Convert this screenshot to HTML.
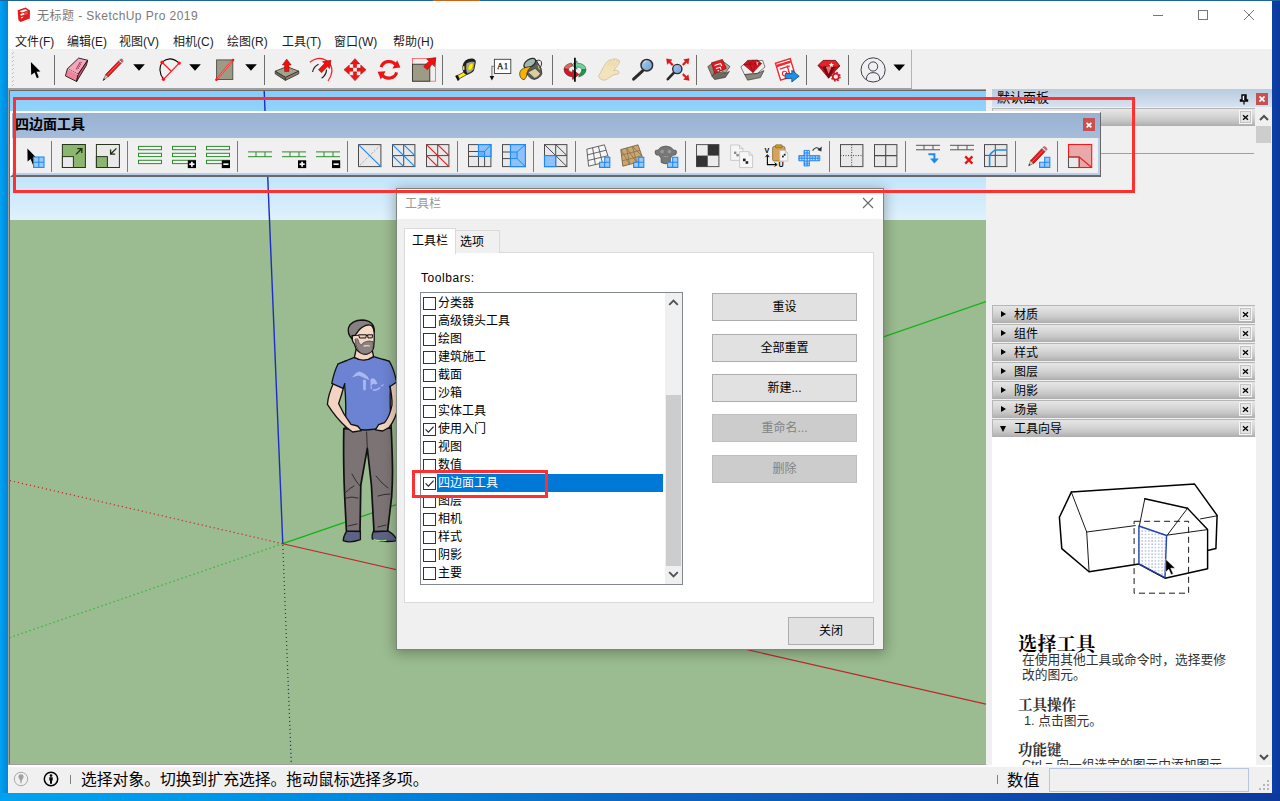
<!DOCTYPE html>
<html lang="zh-CN">
<head>
<meta charset="utf-8">
<title>无标题 - SketchUp Pro 2019</title>
<style>
*{box-sizing:border-box;margin:0;padding:0}
html,body{width:1280px;height:801px;overflow:hidden}
body{position:relative;font-family:"Liberation Sans","Noto Sans CJK SC",sans-serif;font-size:12px;color:#000;
 background:linear-gradient(90deg,#00a2f2 0px,#0086d6 8px,#0a5cb8 640px,#0c3fa6 1272px,#0b3a9e 1280px)}
.abs{position:absolute}
#deskbottom{left:0;top:793px;width:1280px;height:8px;background:linear-gradient(90deg,#00a2ee 0,#0098e8 200px,#0082da 400px,#0a66c2 640px,#0c52b2 900px,#0b3a9c 1280px)}
#desktop-top{left:0;top:0;width:1280px;height:1px;background:#1b64a0}
#desktop-top i{position:absolute;left:433px;top:0;width:47px;height:1px;background:#c8641e}
#win{left:8px;top:1px;width:1264px;height:792px;background:#fff}
#title{left:37px;top:8px;height:17px;line-height:17px;font-size:12px;color:#7a7a7a;white-space:nowrap;letter-spacing:0.45px}
#menubar{left:8px;top:30px;width:1264px;height:20px;background:#fff}
#menubar span{position:absolute;top:2px;color:#1c1c1c;line-height:20px;white-space:nowrap}
#tbrow{left:8px;top:49px;width:1264px;height:41px;background:#f0f0f0}
#tb{left:8px;top:50px;width:904px;height:38px;background:#f0f0f0;border-right:1px solid #b4b4b4}
#tbline1{left:8px;top:88px;width:904px;height:2px;background:#a0a0a0}
#rightbg{left:986px;top:88px;width:286px;height:677px;background:#f0f0f0}
#vp{left:8px;top:89px;width:978px;height:676px;background:#a0a0a0;overflow:hidden}
#vpin{left:1px;top:1px;width:977px;height:674px;background:#696969}
#scene{left:2px;top:2px;width:976px;height:673px}
#status{left:8px;top:765px;width:1264px;height:28px;background:#f0f0f0}

#dp-head{left:992px;top:89px;width:280px;height:18px;background:linear-gradient(#b9cbdf,#d6e2ef);font-size:13px;line-height:18px;padding-left:5px;white-space:nowrap}
.ph{position:absolute;left:992px;width:263px;height:18px;background:linear-gradient(#e6e6e6 0%,#d6d6d6 40%,#c6c6c6 70%,#adadad 100%);border-top:1px solid #b6b6b6;border-left:1px solid #b6b6b6;font-size:12px;line-height:17px;white-space:nowrap}
.ph b{position:absolute;left:21px;top:1px;font-weight:normal}
.ph i{position:absolute;left:8px;top:5px;width:0;height:0;border-left:5px solid #000;border-top:3.5px solid transparent;border-bottom:3.5px solid transparent}
.ph i.dn{left:7px;top:6px;border-left:3.5px solid transparent;border-right:3.5px solid transparent;border-top:6px solid #000;border-bottom:none}
.ph u{position:absolute;left:246px;top:1px;width:13px;height:14px;background:#e6e6e6;border:1px solid #f6f6f6;outline:1px solid #c4c4c4;outline-offset:-2px;text-decoration:none}
.ph u svg{position:absolute;left:2px;top:3px}
#sb{left:1256px;top:108px;width:16px;height:657px;background:#f0f0f0}
#sbthumb{left:1256px;top:126px;width:15px;height:17px;background:#cdcdcd}
#instr{left:992px;top:437px;width:264px;height:328px;background:#fff;overflow:hidden}
#instr .t1{position:absolute;left:26px;top:197px;font:bold 19px/22px "Liberation Serif","Noto Serif CJK SC",serif;letter-spacing:0.4px;white-space:nowrap}
#instr .t2{position:absolute;left:26px;font:bold 14.5px/18px "Liberation Serif","Noto Serif CJK SC",serif;color:#333;white-space:nowrap}
#instr .p{position:absolute;font-size:12.75px;line-height:15px;color:#333;white-space:nowrap}
#hline{left:992px;top:153px;width:262px;height:1px;background:#a0a0a0}

#status{border-top:2px solid #fff}
#sttext{left:81px;top:769px;font-size:15.8px;line-height:21px;white-space:nowrap}
#vcbl{left:1007px;top:770px;font-size:16.3px;line-height:21px;white-space:nowrap}
#vcb{left:1049px;top:768px;width:200px;height:24px;background:#f0f0f0;border:1px solid #b9c6da}
/*FTBCSS*/
#ftb{left:10px;top:111px;width:1091px;height:66px;background:#f0f0f0;border-top:2px solid #fff;border-left:2px solid #fff;border-right:1px solid #696969;border-bottom:2px solid #696969;box-shadow:inset -2px -2px 0 #b9cfe9}
#ftb-title{left:0;top:0;width:1088px;height:25px;background:linear-gradient(#99b2d2,#a5bcdb);font-weight:bold;font-size:14px;line-height:23px;padding-left:3px;white-space:nowrap}
#ftb-close{left:1071px;top:5px;width:12px;height:13px;background:#c75050}
/*FTBCSSEND*/
/*DLGCSS*/
#dlg{left:396px;top:188px;width:488px;height:462px;background:#f0f0f0;border:1px solid #7b877b;box-shadow:0 2px 12px 1px rgba(0,0,0,0.30)}
#dlg-title{left:0;top:0;width:486px;padding-left:8px;height:30px;background:#fff;color:#999;line-height:30px;white-space:nowrap}
#tabpage{left:6px;top:62px;width:470px;height:351px;background:#fff;border:1px solid #dadada}
#tab1{left:6px;top:38px;width:52px;height:26px;background:#fff;border:1px solid #dadada;border-bottom:none;text-align:center;line-height:24px;white-space:nowrap}
#tab2{left:57px;top:40px;width:45px;height:23px;background:#f0f0f0;border:1px solid #dadada;border-bottom:none;text-align:left;line-height:22px;white-space:nowrap;padding-left:4px}
#tblabel{left:23px;top:79px;line-height:18px;letter-spacing:0.55px;white-space:nowrap}
#lb{position:absolute;left:22px;top:102px;width:263px;height:293px;background:#fff;border:1px solid #828790;overflow:hidden}
.it{position:absolute;left:0;width:244px;height:18px;white-space:nowrap}
.it i{position:absolute;left:2px;top:3px;width:13px;height:13px;border:1px solid #333;background:#fff}
.it i svg{position:absolute;left:0;top:0}
.it b{position:absolute;left:16px;top:0;height:18px;line-height:18px;font-weight:normal;padding-left:1px}
.it b.sel{background:#0078d7;color:#fff;width:226px}
#lbsb{left:244px;top:0;width:17px;height:291px;background:#f0f0f0}
#lbthumb{left:1px;top:102px;width:15px;height:171px;background:#cdcdcd}
.btn{position:absolute;background:#e1e1e1;border:1px solid #adadad;text-align:center;line-height:26px;white-space:nowrap}
.btn.dis{background:#cccccc;border-color:#bfbfbf;color:#838383}
/*DLGCSSEND*/
</style>
</head>
<body>
<div class="abs" id="desktop-top"><i></i></div>
<div class="abs" id="deskbottom"></div>
<div class="abs" id="win"></div>
<!--WC--><svg class="abs" style="left:1150px;top:8px" width="110" height="14" viewBox="1150 8 110 14" fill="none" stroke="#777" stroke-width="1">
<path d="M1153 15.5h10"/><rect x="1198.5" y="10.5" width="9" height="9"/><path d="M1244 10L1254 20M1254 10L1244 20"/></svg>
<svg class="abs" style="left:16px;top:6px" width="16" height="17" viewBox="16 6 16 17">
<path d="M17.6 10.2L25.6 7.6L30 10.6L29.8 18.6L20.6 22L18.4 20.2Z" fill="#e21d1d"/>
<path d="M19.4 11.2L25.4 9.2L27.6 10.6L22 12.6ZM20.2 14.2L23.6 13L24.6 13.8L24.6 14.6L21 15.8ZM20.8 17.4L23.2 16.6L23.2 17.6L21 18.4Z" fill="#fff"/>
<path d="M25 12.2L27.8 11.2L27.6 14.2L25 15Z" fill="#f04a4a"/>
</svg>
<div class="abs" id="title">无标题 - SketchUp Pro 2019</div>
<div class="abs" id="menubar">
<span style="left:7px">文件(F)</span><span style="left:59px">编辑(E)</span><span style="left:111px">视图(V)</span><span style="left:165px">相机(C)</span><span style="left:219px">绘图(R)</span><span style="left:274px">工具(T)</span><span style="left:326px">窗口(W)</span><span style="left:385px">帮助(H)</span>
</div>
<div class="abs" id="tbrow"></div>
<div class="abs" id="tb"></div>
<!--TBMAIN-BEGIN-->
<svg class="abs" style="left:8px;top:50px" width="904" height="38" viewBox="8 50 904 38">
<defs>
<path id="dd" d="M0 0h11.6l-5.8 6.6z" fill="#000"/>
<linearGradient id="lens" x1="0" y1="0" x2="1" y2="1"><stop offset="0" stop-color="#a9cbee"/><stop offset="1" stop-color="#6f9fd2"/></linearGradient>
</defs>
<!-- gripper -->
<path d="M12.5 53v34" stroke="#b4b4b4" stroke-width="1" stroke-dasharray="1 3"/>
<path d="M13.5 52v34" stroke="#c8c8c8" stroke-width="1" stroke-dasharray="1 3"/>
<!-- separators -->
<g stroke="#6e6e6e" stroke-width="1">
<path d="M54.5 55v30M264.5 55v30M442.5 55v30M552.5 55v30M696.5 55v30M806.5 55v30M848.5 55v30"/>
</g>
<!-- select arrow -->
<path d="M30.9 62L31.2 75L34.6 72.5L36.9 78.3L38.8 77.3L36.6 71.8L40.4 71.5Z" fill="#000"/>
<!-- eraser -->
<g stroke="#1a1a1a" stroke-width="0.9" stroke-linejoin="round">
<path d="M67.4 68.8L78.6 58.1L87.7 60.2L78.1 74.4Z" fill="#f7a5bb"/>
<path d="M67.4 68.8L78.1 74.4L76.6 81.5L65.4 75.9Z" fill="#f5809c"/>
<path d="M78.1 74.4L87.7 60.2L86.4 65.4L76.6 81.5Z" fill="#c8506e"/>
</g>
<path d="M76 69.5l4.2-7.5M77.5 69l1.5-1.2M78.5 67l1.7-1M79.5 65l1.5-1M80.5 63l1.3-0.6" stroke="#7a2a40" stroke-width="0.8" fill="none"/>
<path d="M67.8 69.2L78 74.6" stroke="#fde0e8" stroke-width="0.9"/>
<!-- pencil -->
<g stroke-linejoin="round">
<path d="M103 80.6L105.8 74.3L108.2 76.7Z" fill="#d8cf9a" stroke="#444" stroke-width="0.6"/>
<path d="M103 80.6l0.8-2.4l1.4 1.3z" fill="#222"/>
<path d="M105.8 74.3L118.8 60.9L121.2 63.3L108.2 76.7Z" fill="#e81414" stroke="#7a1010" stroke-width="0.7"/>
<path d="M107 75.5L120 62.1" stroke="#ff7a7a" stroke-width="0.8"/>
<path d="M118.8 60.9L119.9 59.8L122.3 62.2L121.2 63.3Z" fill="#e8e8e8" stroke="#666" stroke-width="0.5"/>
<path d="M119.9 59.8L120.8 58.9Q122.6 58.6 123.2 61.3L122.3 62.2Z" fill="#e86a7a" stroke="#8a2a3a" stroke-width="0.5"/>
</g>
<use href="#dd" x="133.2" y="64.2"/>
<!-- arc -->
<path d="M163.5 79.3Q157 70 162.1 62.2Q170 55 179.2 63.1" fill="none" stroke="#000" stroke-width="1.1"/>
<path d="M163.5 79.3L179.2 63.1M162.1 62.2L171.3 71.2" stroke="#ff1414" stroke-width="1.2" fill="none"/>
<g fill="#ff1414"><circle cx="162.1" cy="62.2" r="1.7"/><circle cx="179.2" cy="63.1" r="1.7"/><circle cx="163.5" cy="79.3" r="1.7"/></g>
<use href="#dd" x="189.2" y="64.2"/>
<!-- rectangle -->
<rect x="216.6" y="59.9" width="16.2" height="19.6" fill="#9d9a85" stroke="#4e4d42" stroke-width="0.9"/>
<path d="M216.4 79.7L233 60.1" stroke="#ff1e1e" stroke-width="1.8"/>
<path d="M217.4 78.5L232 61.3" stroke="#ffd0d0" stroke-width="0.6"/>
<g fill="#ff1414"><circle cx="216.4" cy="79.7" r="1.3"/><circle cx="233" cy="60.1" r="1.3"/></g>
<use href="#dd" x="245.2" y="64.2"/>
<!-- push/pull -->
<g stroke="#2e2e26" stroke-width="0.8" stroke-linejoin="round">
<path d="M275.2 71.2L286.9 66.6L298.8 71.2L285.4 77.4Z" fill="#a3a08b"/>
<path d="M275.2 71.2L285.4 77.4V80.4L275.2 73.8Z" fill="#6e6c58"/>
<path d="M285.4 77.4L298.8 71.2V73.8L285.4 80.4Z" fill="#85836d"/>
</g>
<path d="M286.7 59.1L291.2 65H288.9V71.4H284.6V65H282.3Z" fill="#f01010" stroke="#8a0a0a" stroke-width="0.5"/>
<!-- offset / follow me -->
<path d="M309.8 62.2Q320 54.5 328.5 62Q335.5 70 328 81" fill="none" stroke="#ff1e28" stroke-width="1.2"/>
<path d="M312.6 72Q313.5 66.5 318.6 64.2M321.6 78.2Q326 75.5 326.6 69.6" fill="none" stroke="#222" stroke-width="1.2"/>
<path d="M331 60.3L329.6 68.6L327.4 66.6L321.6 72.8L318.4 69.7L324.4 63.6L322.4 61.6Z" fill="#f01010" stroke="#8a0a0a" stroke-width="0.5"/>
<!-- move -->
<g fill="#f01414" stroke="#8a0a0a" stroke-width="0.4">
<path d="M355 58.6L359.8 64H356.6V67.6H353.4V64H350.2Z"/>
<path d="M355 80.8L359.8 75.4H356.6V71.8H353.4V75.4H350.2Z"/>
<path d="M343.9 69.7L349.3 64.9V68.1H352.9V71.3H349.3V74.5Z"/>
<path d="M366.1 69.7L360.7 64.9V68.1H357.1V71.3H360.7V74.5Z"/>
</g>
<!-- rotate -->
<g fill="none" stroke="#ee1414" stroke-width="3.1">
<path d="M381.2 67.2A8 7.2 0 0 1 395.6 64.6"/>
<path d="M396.6 72.4A8 7.2 0 0 1 382.2 75"/>
</g>
<path d="M400.4 67.6L392.4 68.4L397.2 60.2Z" fill="#ee1414"/>
<path d="M377.6 71.8L385.6 71.2L380.8 79.4Z" fill="#ee1414"/>
<!-- scale -->
<rect x="412.4" y="58.5" width="23.2" height="22.7" fill="none" stroke="#ff5a64" stroke-width="0.8"/>
<rect x="412.5" y="64.2" width="17.3" height="17" fill="#9d9a85" stroke="#33332a" stroke-width="0.9"/>
<path d="M435.8 57.6L434.6 66.6L432.2 64.3L427.2 69.8L423.7 66.5L428.9 61.2L426.6 58.9Z" fill="#f01010" stroke="#7a0a0a" stroke-width="0.5"/>
<!-- tape measure -->
<path d="M457.6 75.4L465.4 71.4L467 74.4L459.2 78.8Z" fill="#fff000" stroke="#222" stroke-width="0.7"/>
<path d="M455.2 76L457.4 74.8L459.6 79.8L457.8 81Z" fill="#111"/>
<path d="M462.4 66.4Q462.6 63 465.4 60.4Q468.6 58.2 472.6 58.6Q475.8 59.4 475.8 62L474.2 70Q473.2 72.4 467.6 74.8Q463.8 74.6 462.6 70Z" fill="#1e1e1e"/>
<path d="M466.4 63.4Q470 61 474.6 62L473.4 69.4Q471.6 72 467.4 73.4Q465.2 69 466.4 63.4Z" fill="#ababab" stroke="#666" stroke-width="0.4"/>
<ellipse cx="470.6" cy="66.8" rx="2.2" ry="3.9" transform="rotate(24 470.6 66.8)" fill="#fff200" stroke="#8a7a10" stroke-width="0.4"/>
<path d="M462.8 66.4L464.4 65.8L464.6 69.8L463 70.2Z" fill="#f0e000"/>
<!-- text label -->
<rect x="494.4" y="59.3" width="16.4" height="14.2" fill="#fff" stroke="#3c3c3c" stroke-width="0.9"/>
<text x="502.9" y="69.2" text-anchor="middle" font-family="Liberation Serif,serif" font-size="8.8" letter-spacing="0.5" fill="#111" stroke="#111" stroke-width="0.25">A1</text>
<path d="M494.3 66.4H491.9V76.4" fill="none" stroke="#8a8a8a" stroke-width="1.3"/>
<path d="M489.6 76L494.2 76L491.9 80.4Z" fill="#111"/>
<!-- paint bucket -->
<path d="M523.8 65.6L526.4 72.6Q529 78.8 534.4 79.4Q540.4 78 541.8 73.6L541 68.2L536.4 60.6Z" fill="#5d5d5a" stroke="#222" stroke-width="0.8" stroke-linejoin="round"/>
<path d="M528 72.2L535.2 68.4L540.4 73.4Q538.6 77 534.6 78.2Z" fill="#dacf9e" stroke="#333" stroke-width="0.5"/>
<path d="M536.8 64L540 67L540.6 70.4L538.2 68.8Z" fill="#c9bc88" stroke="#333" stroke-width="0.4"/>
<ellipse cx="529.8" cy="63.2" rx="6.6" ry="3.7" transform="rotate(-33 529.8 63.2)" fill="#9db8b2" stroke="#2a2a2a" stroke-width="1.2"/>
<path d="M535.8 60.8Q541.8 58.6 541.6 64Q541.4 66.4 539.6 67.8" fill="none" stroke="#222" stroke-width="0.9"/>
<path d="M519.8 72.4Q521 67.2 531.4 66.4Q527.4 69.6 527 73Q526.8 77.8 524.2 79.8Q519 78.6 519.8 72.4Z" fill="#f8b200" stroke="#3a2a08" stroke-width="0.7"/>
<!-- orbit -->
<g stroke-linejoin="round" stroke-width="0.5">
<path d="M564 69Q564.6 64.4 571.4 63L572.6 66Q568.6 66.8 568.4 69.4Z" fill="#e06a58" stroke="#5a1010"/>
<path d="M564 69Q564 75.6 572.6 77L572.6 79.6L579 74.4L572.6 69.8L572.6 72.4Q568.6 71.8 568.4 69.4Z" fill="#d01828" stroke="#4a060c"/>
<path d="M586 69.6Q585.6 75.4 578.6 76.8L580 73.4Q581.8 72.4 581.8 69.6Z" fill="#1f9a48" stroke="#0a3a1a"/>
<path d="M571.8 65L577 60.8L577 63Q585.6 63.6 586 69.6L581.8 69.6Q581.6 67.2 577 66.8L577 69.2Z" fill="#6fd09a" stroke="#0e4a26"/>
</g>
<path d="M574.9 57.8V81.8" stroke="#000" stroke-width="1.7"/>
<!-- pan hand -->
<path d="M598.3 76.8Q600.4 72.6 603.4 67.2Q605.2 63.6 607.4 61.4Q609.4 59.4 611.6 59.8Q612.8 58.6 614.8 59Q616.6 58.8 617.8 59.8Q619.8 60.2 619.6 62Q618.6 64.6 616.6 66.8L613.6 70.6Q616.4 69.6 618.6 71.2Q619.8 72.6 618.6 73.8Q616.4 74.6 614 74.8Q611 76 608.2 78.4Q605.6 80.6 603.6 80.2Q600 79.4 598.3 76.8Z" fill="#f3e3bc" stroke="#c9b98f" stroke-width="0.7" stroke-linejoin="round"/>
<path d="M611.6 59.8L607.6 66M614.8 59L610.6 66.4M617.8 59.8L613.4 67" stroke="#dccba0" stroke-width="0.7" fill="none"/>
<path d="M606.4 66.4Q609 64.6 611.4 66.6" stroke="#f0ec8a" stroke-width="1" fill="none"/>
<!-- zoom -->
<path d="M642.6 70.8L633.6 79.2" stroke="#2a2a2a" stroke-width="3" stroke-linecap="round"/>
<circle cx="646.8" cy="65.2" r="5.8" fill="url(#lens)" stroke="#2e2e2e" stroke-width="1.5"/>
<path d="M643.4 63.4Q644.4 61.2 646.8 61" stroke="#d8eafa" stroke-width="1" fill="none"/>
<!-- zoom extents -->
<path d="M674 72.6L667.8 79.2" stroke="#2a2a2a" stroke-width="2.6" stroke-linecap="round"/>
<circle cx="677.3" cy="69" r="4.6" fill="url(#lens)" stroke="#2e2e2e" stroke-width="1.4"/>
<g fill="#f01414" stroke="#8a0a0a" stroke-width="0.3">
<path d="M666.4 58.8L672 59.8L670.4 61.4L673.4 64.4L672 65.8L669 62.8L667.4 64.4Z"/>
<path d="M689.2 58.6L688.2 64.2L686.6 62.6L683.6 65.6L682.2 64.2L685.2 61.2L683.6 59.6Z"/>
<path d="M689.2 80.4L683.6 79.4L685.2 77.8L682.2 74.8L683.6 73.4L686.6 76.4L688.2 74.8Z"/>
</g>
<!-- 3D warehouse -->
<g stroke="#2a2a2a" stroke-width="0.6" stroke-linejoin="round">
<path d="M707.8 66.6L713.4 62.4L716 71.4L712 76.2Z" fill="#8a8878"/>
<path d="M722.6 61L730 66.6L725.2 73.2L720 70Z" fill="#aaa898"/>
<path d="M712 76.2L716 71.4L725.2 73.2L729.4 71.4L725.4 77.4L714.6 79.6Z" fill="#6e6c5c"/>
<path d="M711.4 62.8L722.4 59.4L726.4 68.4L714.6 73.6Z" fill="#e01a22" stroke="#8a0a10"/>
</g>
<path d="M714.6 65.4L720.6 63.4L721.8 66M716 68.6L720.2 67.2L721 69.6M717.6 71L719 70.4" stroke="#fff" stroke-width="1.1" fill="none"/>
<!-- extension warehouse -->
<g stroke="#2a2a2a" stroke-width="0.6" stroke-linejoin="round">
<path d="M740.8 66.8L748.4 61.2L762.6 60.4L765 67L757.4 73.4L744.6 74.6Z" fill="#f0f0f0"/>
<path d="M744.6 74.6L757.4 73.4L764 70.6L760.4 77.6L747.6 80.2Z" fill="#8a887a"/>
<path d="M743.6 64.6L747.6 60.4L757.4 60L761.6 63.6L753 72.6Z" fill="#d81420" stroke="#5a0a10"/>
</g>
<path d="M743.6 64.6L761.6 63.6M747.6 60.4L750 64.4L753 72.6M757.4 60L755.6 64L753 72.6M750 64.4L752.6 60.2L755.6 64" stroke="#7a0a12" stroke-width="0.5" fill="none"/>
<path d="M756.6 60.8l0.8 1.6l1.6 0.2l-1.4 1l0.4 1.6l-1.4-0.9" fill="#ffe8d0"/>
<!-- layout -->
<g transform="rotate(-17 786 69)">
<rect x="777.6" y="60.4" width="15.4" height="17.6" fill="#fff" stroke="#f02832" stroke-width="1.4"/>
<path d="M778 63.4H792.6" stroke="#f02832" stroke-width="2.4"/>
<path d="M780 67.2H790.6M788 66V78" stroke="#f02832" stroke-width="1.3"/>
<circle cx="783.4" cy="73" r="2.3" fill="none" stroke="#f02832" stroke-width="1.1"/>
</g>
<path d="M785.2 73.6H791.8V70.2L799.2 76.2L791.8 82V78.6H785.2Z" fill="#1e90e8" stroke="#0a3a6a" stroke-width="0.7" stroke-linejoin="round"/>
<!-- ruby ext manager -->
<g stroke="#5a060c" stroke-width="0.5" stroke-linejoin="round">
<path d="M818 65.6L823.2 60.4H835.4L839.9 66L828.6 78.2Z" fill="#c8101a"/>
<path d="M818 65.6L823.2 60.4H835.4L839.9 66L834.6 67.4L828.6 66.2L822.8 67.2Z" fill="#e8202a"/>
<path d="M822.8 67.2L828.6 66.2L834.6 67.4L828.6 78.2Z" fill="#7a0a12"/>
<path d="M825.8 66.8L828.6 66.2L831.6 66.8L828.6 74Z" fill="#f06a72" stroke="none"/>
</g>
<path d="M831.4 62.4l0.8 1.7l1.8 0.3l-1.5 1l0.4 1.8l-1.5-1l-1.5 1l0.4-1.8l-1.5-1l1.8-0.3z" fill="#fff0d8"/>
<g transform="translate(835.8 76.7)"><circle r="3" fill="#f0f0f0" stroke="#d8141e" stroke-width="1.7"/><circle r="4.1" fill="none" stroke="#d8141e" stroke-width="1.3" stroke-dasharray="1.6 1.62"/><circle r="4.8" fill="none" stroke="#5a060c" stroke-width="0.3" stroke-dasharray="1.9 1.87"/></g>
<!-- user -->
<g fill="none" stroke="#2b2b3c" stroke-width="0.9">
<circle cx="873.1" cy="69.9" r="12.1"/>
<circle cx="873.1" cy="66.5" r="4.6"/>
<path d="M866.4 79.6Q866.4 72.6 873.1 72.6Q879.8 72.6 879.8 79.6"/>
</g>
<use href="#dd" x="893.4" y="64.4"/>
</svg>
<!--TBMAIN-END-->
<div class="abs" id="rightbg"></div>
<div class="abs" id="tbline1"></div>
<div class="abs" id="vp"><div class="abs" id="vpin"></div>
<svg class="abs" id="scene" width="976" height="673" viewBox="10 91 976 673">
<defs><linearGradient id="sky" x1="0" y1="0" x2="0" y2="1"><stop offset="0" stop-color="#84cefb"/><stop offset="1" stop-color="#e0f1fc"/></linearGradient></defs>
<rect x="10" y="91" width="976" height="130" fill="url(#sky)"/>
<rect x="10" y="220" width="976" height="544" fill="#9bbb90"/>
<!--AXES-BEGIN-->
<g fill="none" stroke-width="1.25">
<path d="M282.6 543.7L10 480.6" stroke="#c02424" stroke-dasharray="1.1 3"/>
<path d="M282.6 543.7L10 637.5" stroke="#18b018" stroke-dasharray="1.1 3.13"/>
<path d="M282.8 545L291.3 764" stroke="#1e2ec4" stroke-dasharray="1.1 2.9"/>
<path d="M282.8 543.7L986 301.5" stroke="#10b414"/>
<path d="M282.8 543.7L986 704.2" stroke="#b92a2a" stroke-width="1.15"/>
<path d="M282.8 543.7L264.2 91" stroke="#1e2ec4" stroke-width="1.4"/>
</g>
<!--AXES-END-->
<!--PERSON-BEGIN-->
<g stroke="#111" stroke-width="1.3" stroke-linejoin="round" stroke-linecap="round">
<!-- shoes -->
<path d="M347 530.6Q343.4 536 343.2 540.6Q350 543.4 360.4 539.6L360.4 531Z" fill="#5c6384"/>
<path d="M373.4 531Q371.6 535 372.2 539Q384 543 397 540.6Q395.6 535.4 387.6 530.6Z" fill="#5c6384"/>
<path d="M374 539.6Q380 541.4 386 540.4" stroke="#a6e08a" stroke-width="1.2" fill="none"/>
<!-- pants -->
<path d="M343.8 428.6Q343.4 450 343.8 468.7Q344 482 344.6 494.6L346.4 531L360 531.4L360.8 485L367.3 448.4L371.4 485L374 531.6L387.6 531L391.7 496.3Q392.6 482 392.5 468.7Q392.2 450 391.2 427.8Z" fill="#7b7374" stroke-width="1.7"/>
<path d="M352 474Q356 482 360 486M346 492Q350 488 354 486M346 498Q352 496 358 498M376 476Q382 484 388 488M390 494Q384 494 378 496M348 526l9-2M378 527l8-2M367.3 448.4L366.6 432" fill="none" stroke-width="0.7"/>
<!-- shirt torso -->
<path d="M354.4 357.4L338 364L344.6 384.4Q346.6 405 345.2 428.6L366 430L391.4 427.6Q389.6 405 390.4 386.6L389.4 361.4L373.6 356.6Q364 362.4 354.4 357.4Z" fill="#6c82d2"/>
<!-- left arm -->
<path d="M334.6 380.6Q328 395 327.4 404.4Q336 418 346.6 427.6L352.6 432L361.4 430.6L357.6 426L351 424.4Q343 414 338.6 403.6Q341.6 395 343.4 388Z" fill="#f3d3c1"/>
<!-- right arm -->
<path d="M389.6 384Q392.4 398 392 405Q390 416 384.6 422.6L378.6 424.6L375.4 429.8L382.6 431L389 427.6Q397 417 397.6 406.6Q398.4 394 396.2 381Z" fill="#f3d3c1"/>
<!-- sleeves -->
<path d="M346 360.8L338 364Q334 372 331.8 383.4L343 388.4L346.4 379Z" fill="#6c82d2" stroke="none"/>
<path d="M383.4 359.4L389.4 361.4Q394 369 396.6 382L389.8 386.8L387.2 377Z" fill="#6c82d2" stroke="none"/>
<path d="M346 360.8L338 364Q334 372 331.8 383.4L343 388.4L344.8 383.6M383.4 359.4L389.4 361.4Q394 369 396.6 382L389.8 386.8" fill="none"/>
<!-- neck -->
<path d="M356.2 349L354.4 357.4Q364 363.4 373.6 356.6L372.4 351Z" fill="#f3d3c1"/>
<!-- head/face -->
<path d="M352 335.6Q351.6 341 354.4 344L356.4 349.4Q361 355 366.8 354.2Q372.6 352 373.6 347.6Q374.6 340 374.2 331.4Q373.6 326 370 324L358 327Z" fill="#f6d9c6"/>
<!-- beard -->
<path d="M355 339.4L356 345.4Q357.4 351 361.6 353.4Q366 355.2 370.4 352.6Q373.2 350.4 373.4 345.6L373 341.6Q369.4 340.6 366.4 341.4Q362.6 342.2 361.4 345.2Q358.6 343.4 357.8 339.2Z" fill="#8b8381" stroke-width="0.5"/>
<path d="M363.4 345.6Q366.8 344.4 370 345.4L369.6 346.6Q366.8 345.8 363.8 346.8Z" fill="#f6d9c6" stroke="none"/>
<!-- hair -->
<path d="M352.4 339.4Q346.8 333.4 348.6 327.4Q352 320 362.2 320Q368 320.2 371.4 323.2Q374.6 326.4 374.4 332L372.6 326.4Q369.4 324 365.8 325.4Q360 328 357.6 332L355 335.4L352 335.8Z" fill="#878080"/>
</g>
<!-- glasses -->
<path d="M351.8 335.4L358.6 335.4" fill="none" stroke="#111" stroke-width="0.9"/>
<path d="M358.6 334.8L366.4 334.8L365.8 338L359.6 338ZM367.6 334.8L372.6 334.8L372.2 337.8L368 338Z" fill="#e8d2c4" stroke="#111" stroke-width="1"/>
<path d="M366.2 335.4H367.8" stroke="#111" stroke-width="0.9"/>
<!-- great lakes logo -->
<path d="M352 377.6Q355 372.6 359.4 371.4Q364 372.6 367.6 376.4L369.4 380L366.6 379Q362 377 358.6 375.6Q355 376.6 352 377.6ZM363 380Q365.6 378.4 366 381L365.8 389.6Q364.4 391.6 363.2 389.6ZM370.4 379.4Q373.4 377 375.6 380L377.6 383.6L375.6 384.4Q372.6 383 371.4 385.4L372.4 389.6L370.6 388.4ZM373 389.6Q377 389.6 380.6 386.6L379.6 389Q376.6 391.4 373 391ZM380.6 385.6L384.2 384L382.6 386.4Z" fill="#a9b8ee"/>
<!--PERSON-END-->
</svg>
</div>
<div class="abs" id="status"></div>
<svg class="abs" style="left:12px;top:770px" width="50" height="18" viewBox="12 770 50 18">
<circle cx="21" cy="779" r="6.7" fill="none" stroke="#a8a8a8" stroke-width="1"/>
<path d="M21 774.2a2.6 2.6 0 0 1 2.6 2.6c0 1.6-1.3 2.4-1.8 3.6l-0.4 3h-0.8l-0.4-3c-0.5-1.2-1.8-2-1.8-3.6a2.6 2.6 0 0 1 2.6-2.6z" fill="#a0a0a0"/>
<circle cx="51" cy="779" r="6.7" fill="none" stroke="#000" stroke-width="1.5"/>
<circle cx="51" cy="775.6" r="1.3" fill="#000"/>
<path d="M49.3 777.3h3.4v3.2h-0.7v3.2h-2v-3.2h-0.7z" fill="#000"/>
</svg>
<div class="abs" style="left:70px;top:775px;width:1px;height:9px;background:#808080"></div>
<div class="abs" id="sttext">选择对象。切换到扩充选择。拖动鼠标选择多项。</div>
<div class="abs" style="left:997px;top:775px;width:1px;height:9px;background:#808080"></div>
<div class="abs" id="vcbl">数值</div>
<div class="abs" id="vcb"></div>
<svg class="abs" style="left:1258px;top:779px" width="12" height="12" viewBox="0 0 12 12" fill="#b8b8b8"><rect x="9" y="1" width="2" height="2"/><rect x="5" y="5" width="2" height="2"/><rect x="9" y="5" width="2" height="2"/><rect x="1" y="9" width="2" height="2"/><rect x="5" y="9" width="2" height="2"/><rect x="9" y="9" width="2" height="2"/></svg>
<div class="abs" id="dp-head">默认面板</div>
<svg class="abs" style="left:1239px;top:94px" width="10" height="11" viewBox="0 0 10 11"><path d="M3 1h4v5h1.5v1H1.5V6H3z" fill="#fff" stroke="#000" stroke-width="1.4"/><path d="M6 1.5v4.5" stroke="#000" stroke-width="1.6"/><path d="M5 7v3.5" stroke="#000" stroke-width="1.2"/></svg>
<div class="abs" style="left:1256px;top:93px;width:12px;height:12px;background:#c75050"><svg class="abs" style="left:3px;top:3px" width="6" height="6" viewBox="0 0 6 6"><path d="M0.5 0.5L5.5 5.5M5.5 0.5L0.5 5.5" stroke="#fff" stroke-width="1.7"/></svg></div>
<div class="ph" style="top:108px"><u><svg width="7" height="7" viewBox="0 0 7 7"><path d="M1 1.2L6 5.8M6 1.2L1 5.8" stroke="#000" stroke-width="1.3" fill="none"/></svg></u></div>
<div class="abs" id="hline"></div>
<div class="ph" style="top:305px"><i></i><b>材质</b><u><svg width="7" height="7" viewBox="0 0 7 7"><path d="M1 1.2L6 5.8M6 1.2L1 5.8" stroke="#000" stroke-width="1.3" fill="none"/></svg></u></div>
<div class="ph" style="top:324px"><i></i><b>组件</b><u><svg width="7" height="7" viewBox="0 0 7 7"><path d="M1 1.2L6 5.8M6 1.2L1 5.8" stroke="#000" stroke-width="1.3" fill="none"/></svg></u></div>
<div class="ph" style="top:343px"><i></i><b>样式</b><u><svg width="7" height="7" viewBox="0 0 7 7"><path d="M1 1.2L6 5.8M6 1.2L1 5.8" stroke="#000" stroke-width="1.3" fill="none"/></svg></u></div>
<div class="ph" style="top:362px"><i></i><b>图层</b><u><svg width="7" height="7" viewBox="0 0 7 7"><path d="M1 1.2L6 5.8M6 1.2L1 5.8" stroke="#000" stroke-width="1.3" fill="none"/></svg></u></div>
<div class="ph" style="top:381px"><i></i><b>阴影</b><u><svg width="7" height="7" viewBox="0 0 7 7"><path d="M1 1.2L6 5.8M6 1.2L1 5.8" stroke="#000" stroke-width="1.3" fill="none"/></svg></u></div>
<div class="ph" style="top:400px"><i></i><b>场景</b><u><svg width="7" height="7" viewBox="0 0 7 7"><path d="M1 1.2L6 5.8M6 1.2L1 5.8" stroke="#000" stroke-width="1.3" fill="none"/></svg></u></div>
<div class="ph" style="top:419px"><i class="dn"></i><b>工具向导</b><u><svg width="7" height="7" viewBox="0 0 7 7"><path d="M1 1.2L6 5.8M6 1.2L1 5.8" stroke="#000" stroke-width="1.3" fill="none"/></svg></u></div>
<div class="abs" id="sb"></div><div class="abs" id="sbthumb"></div>
<svg class="abs" style="left:1259px;top:114px" width="10" height="7" viewBox="0 0 10 7"><path d="M1 6L5 2L9 6" stroke="#505050" stroke-width="2" fill="none"/></svg>
<svg class="abs" style="left:1259px;top:754px" width="10" height="7" viewBox="0 0 10 7"><path d="M1 1L5 5L9 1" stroke="#505050" stroke-width="2" fill="none"/></svg>
<div class="abs" id="instr">
<svg class="abs" style="left:0;top:0" width="264" height="190" viewBox="0 0 264 190">
<defs><pattern id="dots" width="3.3" height="3.3" patternUnits="userSpaceOnUse"><rect x="1.2" y="1.2" width="1" height="1" fill="#5570c4"/></pattern></defs>
<polyline points="79.3,55.1 202.6,47.1 225.1,78.4 223.9,111.6 215.6,113.5 215.6,131.7 173.0,141.2 146.9,127.0 97.1,134.8 69.8,111.6 67.4,80.3 79.3,55.1" fill="none" stroke="#000" stroke-width="1.5" stroke-linejoin="round" stroke-linecap="round" /><polyline points="79.3,55.1 94.7,95.0 97.1,134.8" fill="none" stroke="#000" stroke-width="0.9" stroke-linejoin="round" stroke-linecap="round" /><polyline points="94.7,95.0 143.3,88.6" fill="none" stroke="#000" stroke-width="0.9" stroke-linejoin="round" stroke-linecap="round" /><polyline points="152.8,61.8 195.5,71.3" fill="none" stroke="#000" stroke-width="1.4" stroke-linejoin="round" stroke-linecap="round" /><polyline points="152.8,61.8 147.4,88.6" fill="none" stroke="#000" stroke-width="0.9" stroke-linejoin="round" stroke-linecap="round" /><polyline points="195.5,71.3 215.6,92.6 215.6,113.5" fill="none" stroke="#000" stroke-width="1.4" stroke-linejoin="round" stroke-linecap="round" /><polyline points="195.5,71.3 175.3,98.1" fill="none" stroke="#000" stroke-width="0.9" stroke-linejoin="round" stroke-linecap="round" /><polyline points="175.3,98.1 215.6,92.6" fill="none" stroke="#000" stroke-width="0.9" stroke-linejoin="round" stroke-linecap="round" /><polyline points="208.5,81.9 225.1,78.8" fill="none" stroke="#000" stroke-width="0.9" stroke-linejoin="round" stroke-linecap="round" /><polygon points="146.9,89.0 174.6,98.5 173.0,140.5 146.9,127.0" fill="url(#dots)" stroke="#2244b0" stroke-width="1.4" stroke-linejoin="round"/><rect x="142.1" y="84.3" width="54.5" height="71.9" fill="none" stroke="#000" stroke-width="0.9" stroke-dasharray="6 4"/><path d="M173.7 122.2 l0 13 l3 -3 l2.5 5.5 l2 -1 l-2.5 -5.5 l4.5 0z" fill="#000" stroke="#fff" stroke-width="0.5"/></svg>

<div class="t1">选择工具</div>
<div class="p" style="left:30px;top:215px">在使用其他工具或命令时，选择要修</div>
<div class="p" style="left:30px;top:230px">改的图元。</div>
<div class="t2" style="top:259px">工具操作</div>
<div class="p" style="left:32px;top:276px">1. 点击图元。</div>
<div class="t2" style="top:304px">功能键</div>
<div class="p" style="left:30px;top:320px">Ctrl = 向一组选定的图元中添加图元</div>
</div>

<!--FTB-BEGIN-->
<div class="abs" id="ftb"><div class="abs" id="ftb-title">四边面工具</div>
<div class="abs" id="ftb-close"><svg class="abs" style="left:3px;top:4px" width="6" height="6" viewBox="0 0 6 6"><path d="M0.6 0.8L5.4 5.4M5.4 0.8L0.6 5.4" stroke="#fff" stroke-width="1.7"/></svg></div>
<svg class="abs" style="left:0;top:27px" width="1088" height="36" viewBox="12 140 1088 36">
<path d="M51.5 141v31" stroke="#7a7a7a" stroke-width="1"/>
<path d="M127.5 141v31" stroke="#7a7a7a" stroke-width="1"/>
<path d="M237.5 141v31" stroke="#7a7a7a" stroke-width="1"/>
<path d="M347.5 141v31" stroke="#7a7a7a" stroke-width="1"/>
<path d="M457.5 141v31" stroke="#7a7a7a" stroke-width="1"/>
<path d="M533.5 141v31" stroke="#7a7a7a" stroke-width="1"/>
<path d="M575.5 141v31" stroke="#7a7a7a" stroke-width="1"/>
<path d="M685.5 141v31" stroke="#7a7a7a" stroke-width="1"/>
<path d="M829.5 141v31" stroke="#7a7a7a" stroke-width="1"/>
<path d="M905.5 141v31" stroke="#7a7a7a" stroke-width="1"/>
<path d="M1015.5 141v31" stroke="#7a7a7a" stroke-width="1"/>
<path d="M1057.5 141v31" stroke="#7a7a7a" stroke-width="1"/>
<path d="M27.4 148.6L27.6 161.4L30.6 159L32.8 164.4L34.8 163.5L32.6 158.2L36.6 158Z" fill="#000"/>
<rect x="33.6" y="157.0" width="10.4" height="10.4" fill="#9ccaf8" stroke="#1e8af0" stroke-width="1.1"/><path d="M38.8 157.0v10.4M33.6 162.2h10.4" stroke="#1e8af0" stroke-width="1.1"/>
<rect x="62.4" y="144.5" width="23" height="23" fill="#8cb56f" stroke="#26361a" stroke-width="1"/>
<rect x="62.4" y="156.6" width="11" height="10.9" fill="#e9e9e9" stroke="#26361a" stroke-width="1"/>
<path d="M76 154.4L81.4 149M77.4 148.6H81.8V153" stroke="#1e2e12" stroke-width="1.3" fill="none"/>
<rect x="96.4" y="144.5" width="23" height="23" fill="#e9e9e9" stroke="#26361a" stroke-width="1"/>
<rect x="96.4" y="156.6" width="11" height="10.9" fill="#8cb56f" stroke="#26361a" stroke-width="1"/>
<path d="M116.4 148.4L111 153.8M110.6 149.6V154.2H115.2" stroke="#1e2e12" stroke-width="1.3" fill="none"/>
<rect x="138.5" y="146.4" width="23" height="3.3" fill="#f4f4f4" stroke="#2f8a2f" stroke-width="1"/>
<rect x="138.5" y="153.3" width="23" height="3.3" fill="#f4f4f4" stroke="#2f8a2f" stroke-width="1"/>
<rect x="138.5" y="160.3" width="23" height="3.3" fill="#f4f4f4" stroke="#2f8a2f" stroke-width="1"/>
<rect x="172.5" y="146.4" width="23" height="3.3" fill="#f4f4f4" stroke="#2f8a2f" stroke-width="1"/>
<rect x="172.5" y="153.3" width="23" height="3.3" fill="#f4f4f4" stroke="#2f8a2f" stroke-width="1"/>
<rect x="172.5" y="160.3" width="23" height="3.3" fill="#f4f4f4" stroke="#2f8a2f" stroke-width="1"/>
<rect x="187.8" y="160.3" width="8.2" height="7.8" fill="#000"/>
<path d="M189.3 164.2h5.2" stroke="#fff" stroke-width="1.7"/>
<path d="M191.9 161.7v5" stroke="#fff" stroke-width="1.7"/>
<rect x="206.5" y="146.4" width="23" height="3.3" fill="#f4f4f4" stroke="#2f8a2f" stroke-width="1"/>
<rect x="206.5" y="153.3" width="23" height="3.3" fill="#f4f4f4" stroke="#2f8a2f" stroke-width="1"/>
<rect x="206.5" y="160.3" width="23" height="3.3" fill="#f4f4f4" stroke="#2f8a2f" stroke-width="1"/>
<rect x="221.8" y="160.3" width="8.2" height="7.8" fill="#000"/>
<path d="M223.3 164.2h5.2" stroke="#fff" stroke-width="1.7"/>
<path d="M248.0 151.9h24M248.0 156.7h24M256.0 151.9V156.7M265.0 151.9V156.7" stroke="#2f8a2f" stroke-width="1" fill="none"/>
<path d="M282.0 151.9h24M282.0 156.7h24M290.0 151.9V156.7M299.0 151.9V156.7" stroke="#2f8a2f" stroke-width="1" fill="none"/>
<rect x="298.0" y="160.3" width="8.2" height="7.8" fill="#000"/>
<path d="M299.5 164.2h5.2" stroke="#fff" stroke-width="1.7"/>
<path d="M302.1 161.7v5" stroke="#fff" stroke-width="1.7"/>
<path d="M316.0 151.9h24M316.0 156.7h24M324.0 151.9V156.7M333.0 151.9V156.7" stroke="#2f8a2f" stroke-width="1" fill="none"/>
<rect x="332.0" y="160.3" width="8.2" height="7.8" fill="#000"/>
<path d="M333.5 164.2h5.2" stroke="#fff" stroke-width="1.7"/>
<rect x="358.5" y="144.6" width="22.4" height="22" fill="#e9e9e9" stroke="#4a4a4a" stroke-width="1"/>
<path d="M358.5 166.6L380.9 144.6" stroke="#8a8a8a" stroke-width="0.9" stroke-dasharray="1 1.2"/>
<path d="M358.5 144.6L380.9 166.6" stroke="#1e8af0" stroke-width="1.2"/>
<rect x="392.5" y="144.6" width="22.4" height="22" fill="#e9e9e9" stroke="#4a4a4a" stroke-width="1"/>
<path d="M403.7 144.6v22M392.5 155.6h22.4" stroke="#4a4a4a" stroke-width="1"/>
<path d="M392.5 144.6l11.2 11M403.7 144.6l11.2 11M392.5 155.6l11.2 11M403.7 155.6l11.2 11" stroke="#1e8af0" stroke-width="1.2"/>
<rect x="426.5" y="144.6" width="22.4" height="22" fill="#e9e9e9" stroke="#4a4a4a" stroke-width="1"/>
<path d="M437.7 144.6v22M426.5 155.6h22.4" stroke="#4a4a4a" stroke-width="1"/>
<path d="M426.5 144.6l11.2 11M437.7 144.6l11.2 11M426.5 155.6l11.2 11M437.7 155.6l11.2 11" stroke="#e81e1e" stroke-width="1.2"/>
<rect x="468.5" y="144.6" width="22.4" height="22" fill="#e9e9e9" stroke="#4a4a4a" stroke-width="1"/>
<path d="M468.5 151.5h10M468.5 156.4h22.4M478.5 144.6v22M484.6 156.4v10.2" stroke="#4a4a4a" stroke-width="1"/>
<rect x="478.5" y="144.6" width="12.4" height="11.8" fill="#8fc2fa" stroke="#1e8af0" stroke-width="1.2"/>
<rect x="478.5" y="151.4" width="6.1" height="5" fill="#6aaef6" stroke="#1e8af0" stroke-width="1"/>
<path d="M484.6 151.4L490.9 144.6" stroke="#1e8af0" stroke-width="1"/>
<rect x="502.5" y="144.6" width="22.4" height="22" fill="#e9e9e9" stroke="#4a4a4a" stroke-width="1"/>
<path d="M502.5 152h8M502.5 158.6h8" stroke="#4a4a4a" stroke-width="1"/>
<rect x="510.5" y="144.6" width="14.9" height="22" fill="#8fc2fa" stroke="#1e8af0" stroke-width="1.2"/>
<rect x="510.5" y="152" width="6.6" height="6.6" fill="#7ab8f8" stroke="#1e8af0" stroke-width="1"/>
<path d="M517.1 152L525.4 144.6M517.1 158.6L525.4 166.6" stroke="#1e8af0" stroke-width="1"/>
<rect x="544.5" y="144.6" width="22.4" height="22" fill="#e9e9e9" stroke="#4a4a4a" stroke-width="1"/>
<path d="M555.7 144.6v22M544.5 155.6h22.4M544.5 144.6l11.2 11M555.7 144.6l11.2 11M555.7 155.6l11.2 11" stroke="#4a4a4a" stroke-width="1"/>
<rect x="544.5" y="155.6" width="11.2" height="11" fill="#8fc2fa" stroke="#1e8af0" stroke-width="1.2"/>
<path d="M586.8 149.2L604.4 144.8L609.6 161.2L588.6 166.2Z" fill="#f6f6f6" stroke="#555" stroke-width="0.9"/>
<path d="M592.6 147.8L595.4 164.6M598.4 146.3L602.4 162.9M587.4 154.9L606.1 150.2M588 160.5L607.8 155.7" stroke="#555" stroke-width="0.9" fill="none"/>
<path d="M604.7 157.2h5.1v10.2h-10.2v-5.1h5.1z" fill="#9ccaf8" stroke="#1e8af0" stroke-width="1.1"/><path d="M604.7 162.3v5.1M604.7 162.3h5.1" stroke="#1e8af0" stroke-width="1.1"/>
<path d="M620.8 149.6L638 144.8L643.6 160.6L622.8 166.2Z" fill="#c9a673" stroke="#6a5a3a" stroke-width="0.8"/>
<path d="M626.6 148L629.6 164.4M632.4 146.4L636.6 162.4M621.4 155.2L640 150.4M622.2 160.8L641.8 155.8M620.8 149.6L629.6 164.4M626.6 148L636.6 162.4M632.4 146.4L641.8 155.8" stroke="#7a6238" stroke-width="0.6" fill="none"/>
<path d="M638.7 157.2h5.1v10.2h-10.2v-5.1h5.1z" fill="#9ccaf8" stroke="#1e8af0" stroke-width="1.1"/><path d="M638.7 162.3v5.1M638.7 162.3h5.1" stroke="#1e8af0" stroke-width="1.1"/>
<path d="M655 152.4Q654.6 149.6 658 150L660.4 147.4Q665.8 144.6 671.2 147.4L673.6 150Q677 149.6 676.6 152.4Q676.4 155.6 673 155.2L670.6 158V162.4Q665.8 165.4 661 162.4V158L658.6 155.2Q655.2 155.6 655 152.4Z" fill="#777" stroke="#4a4a4a" stroke-width="0.6"/>
<circle cx="662.2" cy="151.6" r="1.8" fill="#999"/><circle cx="669.4" cy="151.6" r="1.8" fill="#999"/><path d="M663.6 156.6h4.4" stroke="#999" stroke-width="1"/>
<path d="M672.7 157.2h5.1v10.2h-10.2v-5.1h5.1z" fill="#9ccaf8" stroke="#1e8af0" stroke-width="1.1"/><path d="M672.7 162.3v5.1M672.7 162.3h5.1" stroke="#1e8af0" stroke-width="1.1"/>
<rect x="696.5" y="144.6" width="22.4" height="22" fill="#ececec" stroke="#555" stroke-width="1"/>
<rect x="707.7" y="144.6" width="11.2" height="11" fill="#333"/><rect x="696.5" y="155.6" width="11.2" height="11" fill="#333"/>
<path d="M730.6 145.0h8.8l3.6 3.6v11.8h-12.4z" fill="#f6f6f6" stroke="#c0c0c0" stroke-width="0.8"/>
<path d="M739.4 145.0v3.6h3.6" fill="none" stroke="#c0c0c0" stroke-width="0.8"/>
<rect x="734" y="151.6" width="2.4" height="2.4" fill="#8a8a8a"/><rect x="736.4" y="154" width="2.4" height="2.4" fill="#8a8a8a"/>
<path d="M739.6 151.6h9.4l3.6 3.6v12.4h-13.0z" fill="#f6f6f6" stroke="#c0c0c0" stroke-width="0.8"/>
<path d="M749.0 151.6v3.6h3.6" fill="none" stroke="#c0c0c0" stroke-width="0.8"/>
<rect x="743" y="158.6" width="2.6" height="2.6" fill="#222"/><rect x="745.6" y="161.2" width="2.6" height="2.6" fill="#222"/>
<rect x="772.6" y="146.4" width="12.4" height="14.6" rx="1.6" fill="#d8a25c" stroke="#8a6a38" stroke-width="0.8"/>
<rect x="775.4" y="144.8" width="6.8" height="3" rx="0.8" fill="#c8a020" stroke="#6a5a20" stroke-width="0.6"/>
<path d="M779.8 150.4h5.6l2.4 2.4v8.2h-8.0z" fill="#f6f6f6" stroke="#c0c0c0" stroke-width="0.8"/>
<path d="M785.4 150.4v2.4h2.4" fill="none" stroke="#c0c0c0" stroke-width="0.8"/>
<rect x="782" y="155.6" width="1.8" height="1.8" fill="#222"/><rect x="783.8" y="153.8" width="1.8" height="1.8" fill="#222"/>
<path d="M767.4 155.4V164.6H776" fill="none" stroke="#000" stroke-width="1.1"/><path d="M765.6 157.2L767.4 154.6L769.2 157.2M774.6 162.8L777.2 164.6L774.6 166.4" fill="none" stroke="#000" stroke-width="1"/>
<text x="764.6" y="152.8" font-family="Liberation Sans,sans-serif" font-size="7.2" font-weight="bold" fill="#000">V</text>
<text x="778.4" y="167" font-family="Liberation Sans,sans-serif" font-size="7.2" font-weight="bold" fill="#000">U</text>
<defs><pattern id="chk" width="2.7" height="2.7" patternUnits="userSpaceOnUse" patternTransform="translate(798.9 150.1)"><rect width="2.7" height="2.7" fill="#2a8cf2"/><rect x="0.75" y="0.75" width="1.45" height="1.45" fill="#eaf4ff"/></pattern></defs>
<path d="M804 150.4h5.4v5.2h10.4v5.2h-10.4v5.2h-5.4v-5.2h-5.2v-5.2h5.2z" fill="url(#chk)" stroke="#1e7fe8" stroke-width="0.8"/>
<path d="M812.6 150.6Q816 145.4 820.4 149.6" fill="none" stroke="#333" stroke-width="1.1"/><path d="M821.8 146.6L821.4 151.6L817.4 150Z" fill="#333"/>
<rect x="840.5" y="144.6" width="22.4" height="22" fill="#e9e9e9" stroke="#4a4a4a" stroke-width="1"/>
<path d="M851.7 144.6v22M840.5 155.6h22.4" stroke="#444" stroke-width="1" stroke-dasharray="1 1.5"/>
<rect x="874.5" y="144.6" width="22.4" height="22" fill="#e9e9e9" stroke="#4a4a4a" stroke-width="1"/>
<path d="M885.7 144.6v22M874.5 155.6h22.4" stroke="#4a4a4a" stroke-width="1.1"/>
<path d="M916.0 145.3h24M916.0 149.8h24M924.0 145.3V149.8M933.0 145.3V149.8" stroke="#555" stroke-width="1" fill="none"/>
<path d="M928.4 154.2h6v5" fill="none" stroke="#1e8af0" stroke-width="2"/><path d="M930 158.6h8.8l-4.4 4.8z" fill="#1e8af0"/>
<path d="M950.0 145.3h24M950.0 149.8h24M958.0 145.3V149.8M967.0 145.3V149.8" stroke="#555" stroke-width="1" fill="none"/>
<path d="M965.2 156.4l7.2 7.2M972.4 156.4l-7.2 7.2" stroke="#e81414" stroke-width="2.2"/>
<rect x="984.5" y="144.6" width="22.4" height="22" fill="#e9e9e9" stroke="#4a4a4a" stroke-width="1"/>
<path d="M995.3 144.6v22M984.5 155.4h22.4" stroke="#4a4a4a" stroke-width="1"/>
<path d="M989.6 166.6V156.4Q989.8 154.6 991 153.4L993.6 151Q994.8 150 996.4 150H1006.9" fill="none" stroke="#1e8af0" stroke-width="1.6"/>
<path d="M1028.6 165.8L1030.6 160.4L1033.8 163.4Z" fill="#d8cf9a" stroke="#444" stroke-width="0.5"/><path d="M1028.6 165.8l0.7-2l1.2 1.1z" fill="#222"/>
<path d="M1030.6 160.4L1042 148.4L1045.2 151.4L1033.8 163.4Z" fill="#e81414" stroke="#7a1010" stroke-width="0.6"/><path d="M1032.2 161.9L1043.6 149.9" stroke="#ff8080" stroke-width="0.7"/>
<path d="M1042 148.4L1043.2 147.2L1046.4 150.2L1045.2 151.4Z" fill="#e8e8e8" stroke="#666" stroke-width="0.4"/><path d="M1043.2 147.2L1044 146.4Q1046.2 146.2 1047.2 149.4L1046.4 150.2Z" fill="#e86a7a" stroke="#8a2a3a" stroke-width="0.4"/>
<path d="M1044.7 157.2h5.1v10.2h-10.2v-5.1h5.1z" fill="#9ccaf8" stroke="#1e8af0" stroke-width="1.1"/><path d="M1044.7 162.3v5.1M1044.7 162.3h5.1" stroke="#1e8af0" stroke-width="1.1"/>
<rect x="1068.5" y="144.5" width="23.2" height="23" fill="#eaa9a9" stroke="#ee1c1c" stroke-width="1.1"/>
<rect x="1068.5" y="157" width="10.7" height="10.5" fill="#e9e9e9" stroke="#555" stroke-width="1"/>
<path d="M1068.5 157H1079.2V167.5M1079.2 157L1091.7 167.5" fill="none" stroke="#ee1c1c" stroke-width="1.1"/>
</svg>
</div>
<!--FTB-END-->
<!--DLG-BEGIN-->
<div class="abs" id="dlg">
<div class="abs" id="dlg-title">工具栏</div>
<div class="abs" style="left:1px;top:1px">
<svg class="abs" style="left:464px;top:7px" width="12" height="12" viewBox="0 0 12 12"><path d="M1 1L11 11M11 1L1 11" stroke="#6a6a6a" stroke-width="1.1"/></svg>
<div class="abs" id="tabpage"></div>
<div class="abs" id="tab2">选项</div>
<div class="abs" id="tab1">工具栏</div>
<div class="abs" id="tblabel">Toolbars:</div>
<div class="abs" id="lb">
<div class="it" style="top:1px"><i></i><b>分类器</b></div>
<div class="it" style="top:19px"><i></i><b>高级镜头工具</b></div>
<div class="it" style="top:37px"><i></i><b>绘图</b></div>
<div class="it" style="top:55px"><i></i><b>建筑施工</b></div>
<div class="it" style="top:73px"><i></i><b>截面</b></div>
<div class="it" style="top:91px"><i></i><b>沙箱</b></div>
<div class="it" style="top:109px"><i></i><b>实体工具</b></div>
<div class="it" style="top:127px"><i><svg width="11" height="11" viewBox="0 0 11 11"><path d="M1.6 5.4L4.4 8.2L9.6 2.6" stroke="#222" stroke-width="1.1" fill="none"/></svg></i><b>使用入门</b></div>
<div class="it" style="top:145px"><i></i><b>视图</b></div>
<div class="it" style="top:163px"><i></i><b>数值</b></div>
<div class="it" style="top:181px"><i><svg width="11" height="11" viewBox="0 0 11 11"><path d="M1.6 5.4L4.4 8.2L9.6 2.6" stroke="#222" stroke-width="1.1" fill="none"/></svg></i><b class="sel">四边面工具</b></div>
<div class="it" style="top:199px"><i></i><b>图层</b></div>
<div class="it" style="top:217px"><i></i><b>相机</b></div>
<div class="it" style="top:235px"><i></i><b>样式</b></div>
<div class="it" style="top:253px"><i></i><b>阴影</b></div>
<div class="it" style="top:271px"><i></i><b>主要</b></div>
<div class="abs" id="lbsb"><div class="abs" id="lbthumb"></div><svg class="abs" style="left:3px;top:6px" width="11" height="7" viewBox="0 0 11 7"><path d="M1.2 5.8L5.5 1.5L9.8 5.8" stroke="#505050" stroke-width="1.8" fill="none"/></svg><svg class="abs" style="left:3px;top:278px" width="11" height="7" viewBox="0 0 11 7"><path d="M1.2 1.2L5.5 5.5L9.8 1.2" stroke="#505050" stroke-width="1.8" fill="none"/></svg></div>
</div>
<div class="btn" style="left:314px;top:103.0px;width:145px;height:28px">重设</div>
<div class="btn" style="left:314px;top:143.5px;width:145px;height:28px">全部重置</div>
<div class="btn" style="left:314px;top:184.0px;width:145px;height:28px">新建...</div>
<div class="btn dis" style="left:314px;top:224.0px;width:145px;height:28px">重命名...</div>
<div class="btn dis" style="left:314px;top:265.0px;width:145px;height:28px">删除</div>
<div class="btn" style="left:390px;top:427px;width:86px;height:28px">关闭</div>
</div>
</div>
<!--DLG-END-->
<!--ANN-BEGIN-->
<div class="abs" style="left:13px;top:97px;width:1122px;height:96px;border:3px solid #ff3030"></div>
<div class="abs" style="left:412px;top:470px;width:136px;height:28px;border:3px solid #ff3030"></div>
<!--ANN-END-->
</body>
</html>
